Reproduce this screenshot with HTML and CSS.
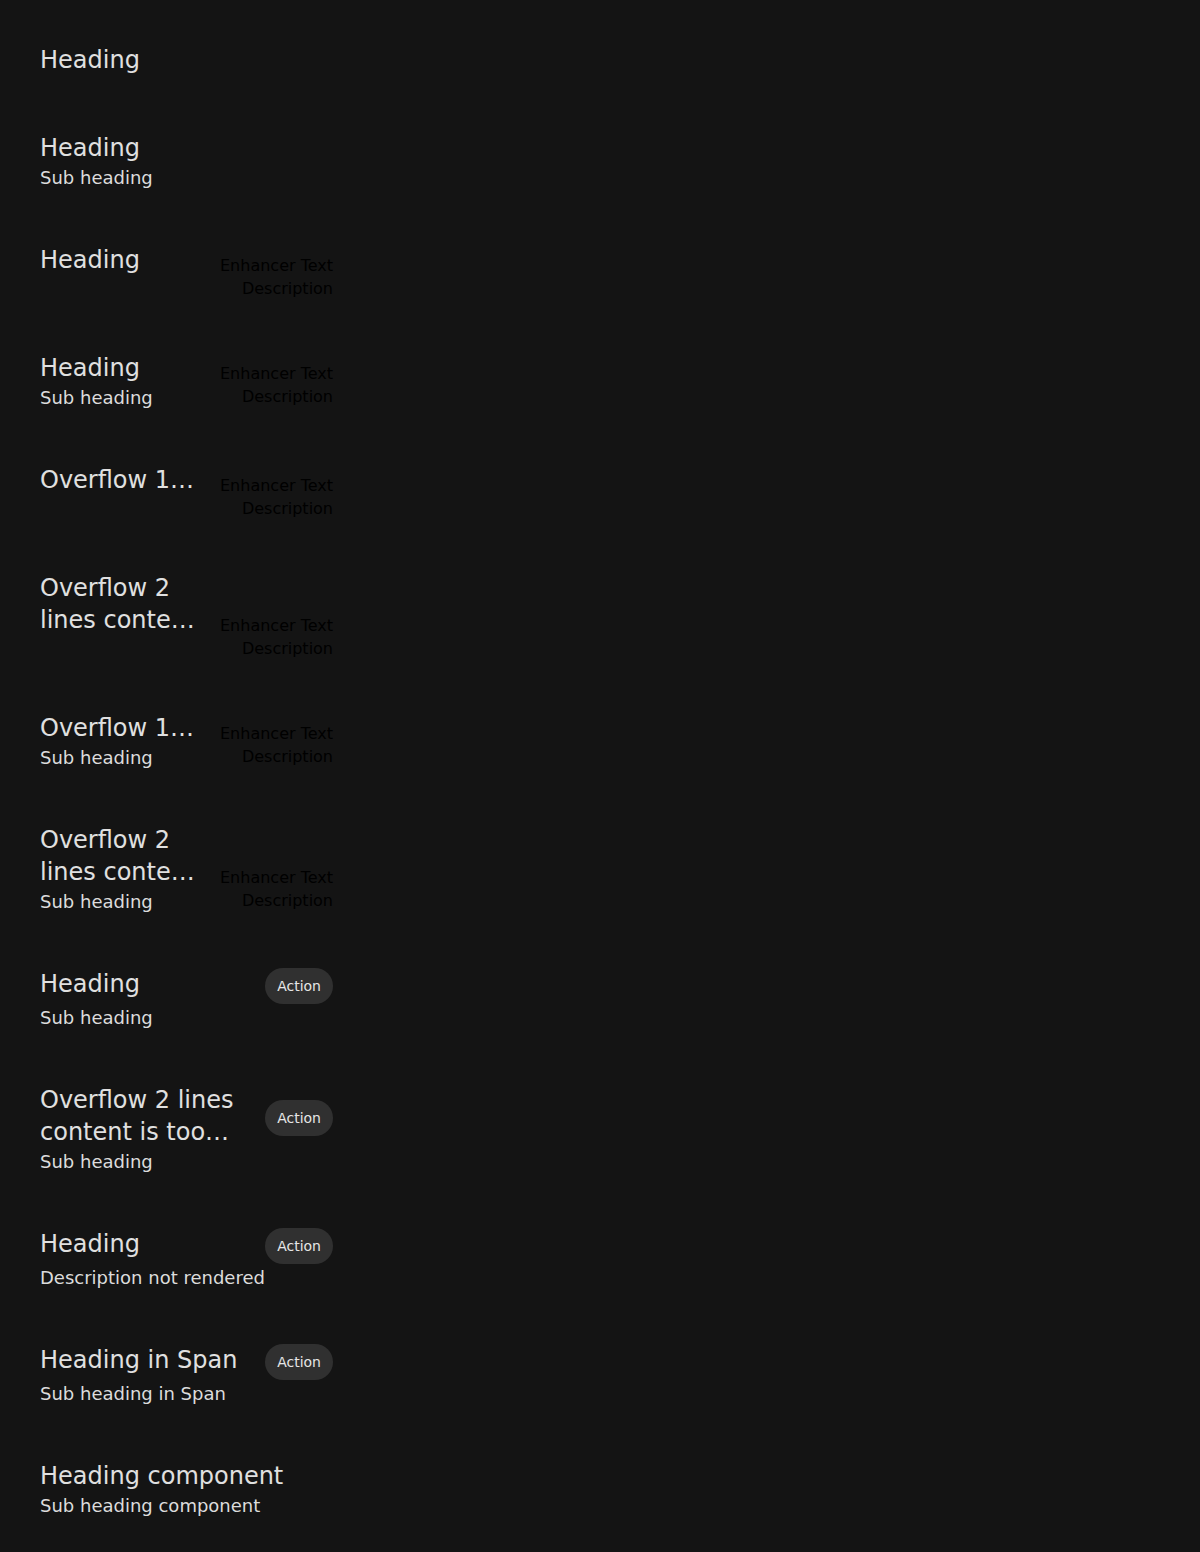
FILE: index.html
```html
<!DOCTYPE html>
<html lang="en">
<head>
<meta charset="utf-8">
<title>Heading variants</title>
<link rel="stylesheet" href="styles.css">
</head>
<body>
<main class="list">
  <section class="item item--solo">
    <div class="text"><h2 class="heading">Heading</h2></div>
  </section>

  <section class="item">
    <div class="text">
      <h2 class="heading">Heading</h2>
      <p class="sub">Sub heading</p>
    </div>
  </section>

  <section class="item">
    <div class="text"><h2 class="heading">Heading</h2></div>
    <div class="enhancer"><span>Enhancer Text</span><span>Description</span></div>
  </section>

  <section class="item">
    <div class="text">
      <h2 class="heading">Heading</h2>
      <p class="sub">Sub heading</p>
    </div>
    <div class="enhancer"><span>Enhancer Text</span><span>Description</span></div>
  </section>

  <section class="item">
    <div class="text"><h2 class="heading heading--line">Overflow 1 line content is too long to fit</h2></div>
    <div class="enhancer"><span>Enhancer Text</span><span>Description</span></div>
  </section>

  <section class="item">
    <div class="text"><h2 class="heading heading--clamp">Overflow 2 lines content is too long to fit in the space</h2></div>
    <div class="enhancer enhancer--low"><span>Enhancer Text</span><span>Description</span></div>
  </section>

  <section class="item">
    <div class="text">
      <h2 class="heading heading--line">Overflow 1 line content is too long to fit</h2>
      <p class="sub">Sub heading</p>
    </div>
    <div class="enhancer"><span>Enhancer Text</span><span>Description</span></div>
  </section>

  <section class="item">
    <div class="text">
      <h2 class="heading heading--clamp">Overflow 2 lines content is too long to fit in the space</h2>
      <p class="sub">Sub heading</p>
    </div>
    <div class="enhancer enhancer--low"><span>Enhancer Text</span><span>Description</span></div>
  </section>

  <section class="item item--stack">
    <div class="head-row">
      <h2 class="heading">Heading</h2>
      <button class="action" type="button">Action</button>
    </div>
    <p class="sub">Sub heading</p>
  </section>

  <section class="item item--stack">
    <div class="head-row">
      <h2 class="heading heading--clamp">Overflow 2 lines content is too long to fit in the space</h2>
      <button class="action action--mid" type="button">Action</button>
    </div>
    <p class="sub">Sub heading</p>
  </section>

  <section class="item item--stack">
    <div class="head-row">
      <h2 class="heading">Heading</h2>
      <button class="action" type="button">Action</button>
    </div>
    <p class="sub">Description not rendered</p>
  </section>

  <section class="item item--stack">
    <div class="head-row">
      <span class="heading">Heading in Span</span>
      <button class="action" type="button">Action</button>
    </div>
    <span class="sub">Sub heading in Span</span>
  </section>

  <section class="item item--stack">
    <div class="head-row">
      <h2 class="heading">Heading component</h2>
    </div>
    <p class="sub">Sub heading component</p>
  </section>
</main>
</body>
</html>
```

FILE: styles.css
```css
* {
  box-sizing: border-box;
}

html,
body {
  margin: 0;
  background: #141414;
}

body {
  min-height: 1552px;
  font-family: "DejaVu Sans", "Noto Sans", sans-serif;
}

.list {
  display: flex;
  flex-direction: column;
  gap: 52px;
  width: 333px;
  padding: 44px 0 0 40px;
}

.item {
  display: flex;
  gap: 20px;
  align-items: flex-start;
}

.item--solo {
  min-height: 36px;
}

.item--stack {
  flex-direction: column;
  gap: 0;
  align-items: stretch;
}

.text {
  flex: 1;
  min-width: 0;
}

.heading {
  display: block;
  margin: 0;
  font-size: 24px;
  line-height: 32px;
  font-weight: 400;
  color: #e0e0e0;
}

.heading--line {
  white-space: nowrap;
  overflow: hidden;
  text-overflow: ellipsis;
}

.heading--clamp {
  display: -webkit-box;
  -webkit-box-orient: vertical;
  -webkit-line-clamp: 2;
  overflow: hidden;
}

.sub {
  display: block;
  margin: 0;
  font-size: 18px;
  line-height: 28px;
  color: #dcdcdc;
}

.enhancer {
  flex: none;
  display: flex;
  flex-direction: column;
  align-items: flex-end;
  margin-top: 11px;
  font-size: 16px;
  line-height: 22.5px;
  white-space: nowrap;
  text-align: right;
  color: #000;
}

.enhancer--low {
  margin-top: 43px;
}

.head-row {
  display: flex;
  gap: 20px;
  align-items: flex-start;
}

.head-row .heading {
  flex: 1;
  min-width: 0;
}

.action {
  flex: none;
  height: 36px;
  padding: 0 12px;
  border: 0;
  border-radius: 18px;
  background: #303030;
  color: #e6e6e6;
  font-family: "DejaVu Sans", "Noto Sans", sans-serif;
  font-size: 14px;
  line-height: 36px;
}

.action--mid {
  align-self: center;
  margin-top: 4px;
}
```
